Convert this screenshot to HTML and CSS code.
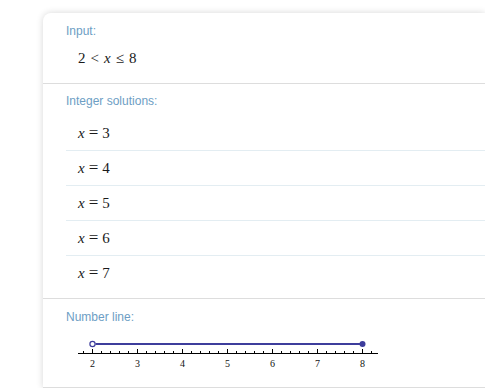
FILE: index.html
```html
<!DOCTYPE html>
<html lang="en">
<head>
  <meta charset="UTF-8" />
  <title>Integer solutions</title>
  <link rel="stylesheet" href="styles.css">
</head>
<body>

  <div class="card">
    <section class="pod">
      <h4>Input:</h4>
      <div class="math input">2<span class="op">&lt;</span><i>x</i><span class="op">≤</span>8</div>
    </section>

    <section class="pod">
      <h4>Integer solutions:</h4>
      <ul class="rows">
        <li class="math"><i>x</i><span class="op eq">=</span>3</li>
        <li class="math"><i>x</i><span class="op eq">=</span>4</li>
        <li class="math"><i>x</i><span class="op eq">=</span>5</li>
        <li class="math"><i>x</i><span class="op eq">=</span>6</li>
        <li class="math"><i>x</i><span class="op eq">=</span>7</li>
      </ul>
    </section>

    <section class="pod last">
      <h4>Number line:</h4>
      <svg class="numline" width="320" height="50" viewBox="0 0 320 50">
        <line x1="12" y1="23.5" x2="312" y2="23.5" stroke="#000" stroke-width="1"/>
        <g stroke="#000" stroke-width="1">
          <line x1="17.5" y1="23" x2="17.5" y2="21"/>
          <line x1="26.5" y1="23" x2="26.5" y2="19"/>
          <line x1="35.5" y1="23" x2="35.5" y2="21"/>
          <line x1="44.5" y1="23" x2="44.5" y2="21"/>
          <line x1="53.5" y1="23" x2="53.5" y2="21"/>
          <line x1="62.5" y1="23" x2="62.5" y2="21"/>
          <line x1="71.5" y1="23" x2="71.5" y2="19"/>
          <line x1="80.5" y1="23" x2="80.5" y2="21"/>
          <line x1="89.5" y1="23" x2="89.5" y2="21"/>
          <line x1="98.5" y1="23" x2="98.5" y2="21"/>
          <line x1="107.5" y1="23" x2="107.5" y2="21"/>
          <line x1="116.5" y1="23" x2="116.5" y2="19"/>
          <line x1="125.5" y1="23" x2="125.5" y2="21"/>
          <line x1="134.5" y1="23" x2="134.5" y2="21"/>
          <line x1="143.5" y1="23" x2="143.5" y2="21"/>
          <line x1="152.5" y1="23" x2="152.5" y2="21"/>
          <line x1="161.5" y1="23" x2="161.5" y2="19"/>
          <line x1="170.5" y1="23" x2="170.5" y2="21"/>
          <line x1="179.5" y1="23" x2="179.5" y2="21"/>
          <line x1="188.5" y1="23" x2="188.5" y2="21"/>
          <line x1="197.5" y1="23" x2="197.5" y2="21"/>
          <line x1="206.5" y1="23" x2="206.5" y2="19"/>
          <line x1="215.5" y1="23" x2="215.5" y2="21"/>
          <line x1="224.5" y1="23" x2="224.5" y2="21"/>
          <line x1="233.5" y1="23" x2="233.5" y2="21"/>
          <line x1="242.5" y1="23" x2="242.5" y2="21"/>
          <line x1="251.5" y1="23" x2="251.5" y2="19"/>
          <line x1="260.5" y1="23" x2="260.5" y2="21"/>
          <line x1="269.5" y1="23" x2="269.5" y2="21"/>
          <line x1="278.5" y1="23" x2="278.5" y2="21"/>
          <line x1="287.5" y1="23" x2="287.5" y2="21"/>
          <line x1="296.5" y1="23" x2="296.5" y2="19"/>
          <line x1="305.5" y1="23" x2="305.5" y2="21"/>
        </g>
        <g class="ticks" text-anchor="middle">
          <text x="26.5" y="37">2</text>
          <text x="71.5" y="37">3</text>
          <text x="116.5" y="37">4</text>
          <text x="161.5" y="37">5</text>
          <text x="206.5" y="37">6</text>
          <text x="251.5" y="37">7</text>
          <text x="296.5" y="37">8</text>
        </g>
        <line x1="29.5" y1="14" x2="297" y2="14" stroke="#3d3d9c" stroke-width="2"/>
        <circle cx="26.5" cy="14" r="2.6" fill="#fff" stroke="#3d3d9c" stroke-width="1.2"/>
        <circle cx="296.5" cy="14" r="3" fill="#3d3d9c"/>
      </svg>
    </section>
  </div>

</body>
</html>
```

FILE: styles.css
```css
* { box-sizing: border-box; }
html { overflow: hidden; }
body {
  margin: 0;
  padding: 13px 0 0 43px;
  background: #fff;
  font-family: "Liberation Sans", Arial, sans-serif;
}
.card {
  background: #fff;
  border-radius: 8px 0 0 0;
  box-shadow: 0 0 7px rgba(0, 0, 0, 0.16);
}
.pod {
  padding: 11px 0 15px 23px;
  border-bottom: 1px solid #dddddd;
}
.pod h4 {
  margin: 0;
  font-size: 12px;
  line-height: 14px;
  font-weight: normal;
  color: #6d9ec4;
}
.math {
  font-family: "Liberation Serif", "Times New Roman", serif;
  font-size: 15px;
  line-height: 20px;
  color: #1a1a1a;
}
.math i { font-style: italic; }
.math .op { margin: 0 5px; }
.math .eq { font-size: 17px; margin: 0 4px; }
.input { margin: 10px 0 0 12px; }
.pod:nth-child(2) { padding: 10px 0 8px 23px; }
.rows {
  list-style: none;
  margin: 8px 0 0;
  padding: 0;
}
.rows li {
  display: flex;
  align-items: center;
  height: 35px;
  padding-left: 12px;
  border-bottom: 1px solid #e3edf2;
}
.rows li:last-child { border-bottom: none; height: 34px; }
.last { padding-bottom: 7px; }
.numline {
  display: block;
  margin-top: 6px;
}
.ticks {
  font-family: "Liberation Serif", "Times New Roman", serif;
  font-size: 10px;
  fill: #111;
}
```
